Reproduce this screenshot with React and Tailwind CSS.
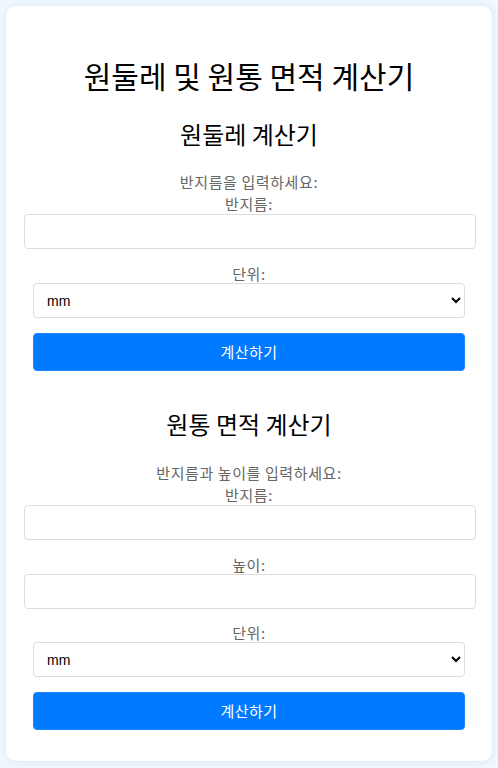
import React from "react";

const font = { fontFamily: '"Noto Sans CJK KR", "Noto Sans", sans-serif' };

function Label({ children, className = "" }) {
  return (
    <div className={`text-center text-[15px] tracking-[0.6px] text-[#666] ${className}`}>{children}</div>
  );
}

function TextInput() {
  return (
    <input
      type="text"
      className="block w-[calc(100%+2px)] h-[35px] rounded-[4px] border border-[#ddd] bg-white px-[10px] text-[14px] outline-none"
    />
  );
}

function UnitSelect() {
  return (
    <div className="mx-[9px]">
      <select
        defaultValue="mm"
        className="block w-full h-[35px] rounded-[4px] border border-[#ddd] bg-white pl-[9px] pr-[6px] text-[14px] text-black"
        style={{ appearance: "auto", fontFamily: '"Liberation Sans", Arial, sans-serif' }}
      >
        <option value="mm">mm</option>
        <option value="cm">cm</option>
        <option value="m">m</option>
      </select>
    </div>
  );
}

function CalcButton({ className = "" }) {
  return (
    <div className={`mx-[9px] ${className}`}>
      <button
        type="button"
        className="block w-full h-[38px] rounded-[4px] border border-[#1a88ff] bg-[#007bff] text-[15px] tracking-[0.4px] text-white"
      >
        계산하기
      </button>
    </div>
  );
}

export default function App() {
  return (
    <div className="min-h-screen bg-[#f0f8ff] p-[6px]" style={font}>
      <div className="rounded-[10px] bg-white px-[18px] pt-[50px] pb-[31px] shadow-[0_0_10px_rgba(0,0,0,0.08)]">
        <h1 className="text-center text-[30px] leading-[38px] text-black">원둘레 및 원통 면적 계산기</h1>

        <h2 className="mt-[25px] text-center text-[24px] leading-[30px] text-black">원둘레 계산기</h2>
        <Label className="mt-[23px] leading-[20px]">반지름을 입력하세요:</Label>
        <Label className="mt-[2px] leading-[20px]">반지름:</Label>
        <TextInput />
        <Label className="mt-[16px] leading-[18px]">단위:</Label>
        <UnitSelect />
        <CalcButton className="mt-[15px]" />

        <h2 className="mt-[38px] text-center text-[24px] leading-[30px] text-black">원통 면적 계산기</h2>
        <Label className="mt-[24px] leading-[20px]">반지름과 높이를 입력하세요:</Label>
        <Label className="mt-[2px] leading-[20px]">반지름:</Label>
        <TextInput />
        <Label className="mt-[16px] leading-[18px]">높이:</Label>
        <TextInput />
        <Label className="mt-[15px] leading-[18px]">단위:</Label>
        <UnitSelect />
        <CalcButton className="mt-[15px]" />
      </div>
    </div>
  );
}
